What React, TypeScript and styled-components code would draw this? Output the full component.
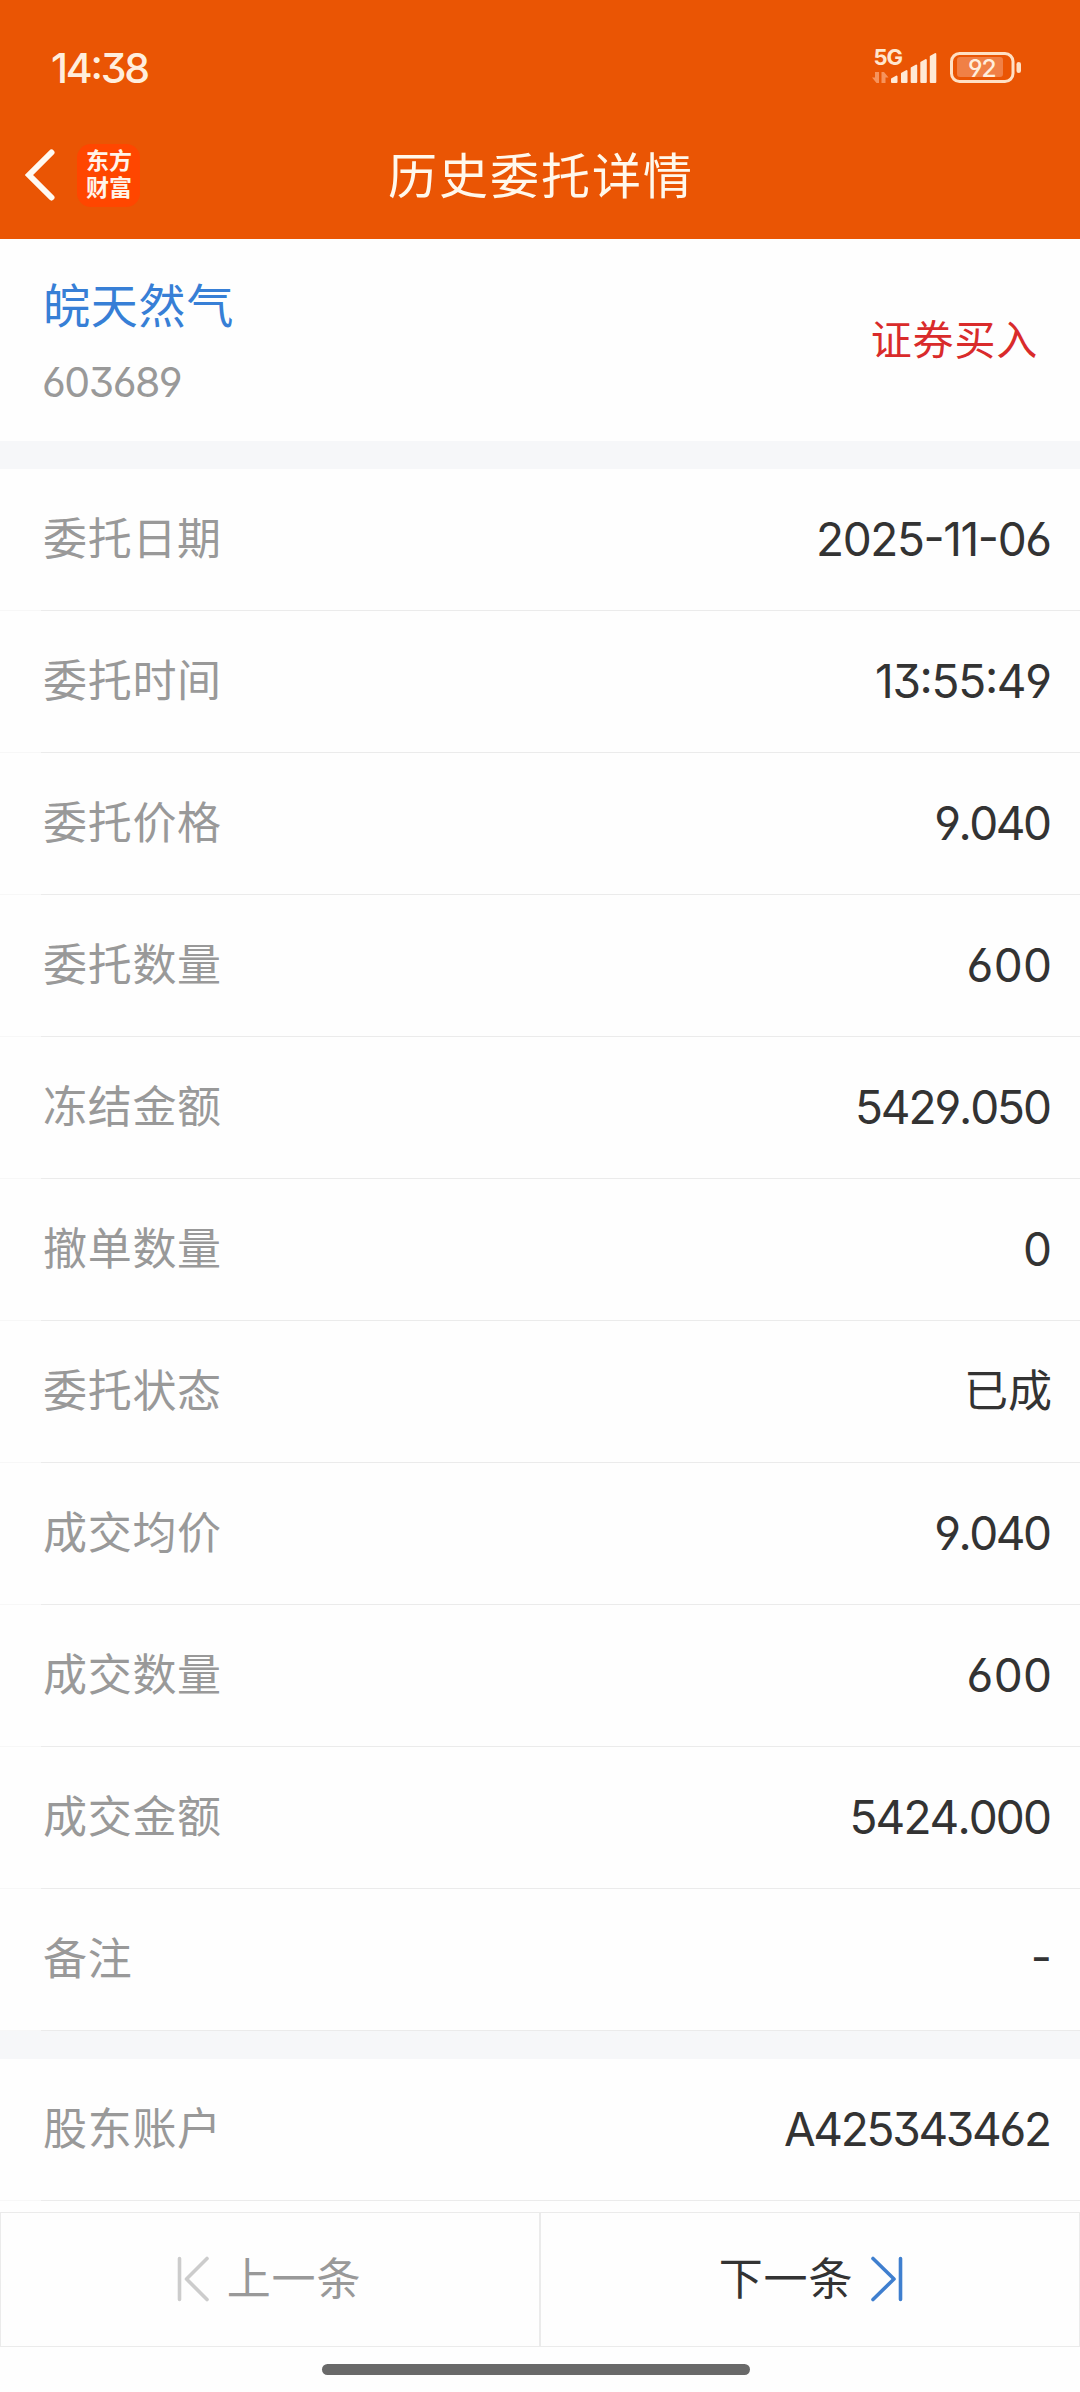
import React from "react";
import styled, { createGlobalStyle } from "styled-components";

const Global = createGlobalStyle`
  * { box-sizing: border-box; }
  html, body { margin: 0; padding: 0; background: #fefefe; }
  body {
    font-family: Inter, "Noto Sans CJK SC", sans-serif;
    font-kerning: none;
    font-feature-settings: "cv03" 1, "cv04" 1, "cv09" 1, "case" 1, "calt" 0;
  }
`;

const Screen = styled.div`
  width: 1080px;
  height: 2392px;
  display: flex;
  flex-direction: column;
  background: #fefefe;
  overflow: hidden;
`;

const Header = styled.header`
  height: 239px;
  flex: none;
  background: #ea5504;
  color: #fff8ec;
`;

const StatusBar = styled.div`
  height: 112px;
  padding: 24px 58px 0 51px;
  display: flex;
  justify-content: space-between;
  align-items: center;
`;

const Clock = styled.span`
  font-size: 41px;
  line-height: 44px;
  font-weight: 500;
  letter-spacing: -2.2px;
  color: #ffeedd;
`;

const StatusIcons = styled.svg`
  display: block;
  width: 152px;
  height: 56px;
`;

const NavBar = styled.nav`
  height: 127px;
  display: grid;
  grid-template-columns: 1fr auto 1fr;
  align-items: center;
  padding: 0 25px;
`;

const NavLeft = styled.div`
  display: flex;
  align-items: center;
  gap: 22px;
`;

const BackIcon = styled.svg`
  display: block;
  width: 30px;
  height: 52px;
  margin-bottom: 2px;
`;

const AppBadge = styled.div`
  width: 63px;
  height: 63px;
  border-radius: 14px;
  background: #ff4600;
  color: #fff4ea;
  padding: 2px 8px 0 9px;
  font: 700 23px/27px "Noto Sans CJK SC", sans-serif;
  word-break: break-all;
`;

const Title = styled.h1`
  margin: 0 -2px 6px 0;
  font: 400 49px/60px "Noto Sans CJK SC", sans-serif;
  letter-spacing: 2px;
`;

const Summary = styled.section`
  height: 202px;
  flex: none;
  padding: 0 42px 0 43px;
  display: flex;
  justify-content: space-between;
  align-items: center;
`;

const Stock = styled.div`
  display: flex;
  flex-direction: column;
  gap: 28px;
`;

const StockName = styled.div`
  font: 400 47px/56px "Noto Sans CJK SC", sans-serif;
  letter-spacing: 0.8px;
  color: #377fd6;
`;

const StockCode = styled.div`
  margin-left: -1px;
  font-size: 41px;
  line-height: 46px;
  letter-spacing: -1.5px;
  color: #999;
`;

const Side = styled.div`
  margin-bottom: 6px;
  font: 400 41px/50px "Noto Sans CJK SC", sans-serif;
  letter-spacing: 0.8px;
  color: #d92b2b;
`;

const Band = styled.div`
  height: 28px;
  flex: none;
  background: #f6f7f9;
`;

const Row = styled.div`
  height: 142px;
  flex: none;
  padding: 0 28px 0 43px;
  display: flex;
  justify-content: space-between;
  align-items: center;
  border-bottom: 1px solid;
  border-image: linear-gradient(to right, #f7f7f7 42px, #ebebeb 42px) 1;
`;

const Label = styled.span`
  margin-bottom: 7px;
  font: 400 44px/60px "Noto Sans CJK SC", sans-serif;
  letter-spacing: 0.7px;
  color: #999;
`;

const Value = styled.span<{ $tracking: number }>`
  font-size: 46px;
  line-height: 60px;
  letter-spacing: ${(p) => p.$tracking}px;
  margin-right: ${(p) => -p.$tracking}px;
  margin-bottom: 1px;
  color: #333;
`;

const TextValue = styled(Label)`
  color: #333;
  letter-spacing: 0;
`;

const Pager = styled.footer`
  margin-top: 11px;
  height: 135px;
  flex: none;
  display: flex;
  border: 1px solid #ebebeb;
`;

const PagerButton = styled.button<{ $disabled?: boolean }>`
  flex: 1;
  border: 0;
  padding: ${(p) => (p.$disabled ? "0 2px 0 0" : "0 0 0 2px")};
  background: none;
  display: flex;
  align-items: center;
  justify-content: center;
  gap: 18px;
  color: ${(p) => (p.$disabled ? "#999" : "#333")};
  & + & { border-left: 2px solid #ebebeb; }
`;

const PagerText = styled.span`
  margin-bottom: 7px;
  font: 400 44px/60px "Noto Sans CJK SC", sans-serif;
  letter-spacing: 0.8px;
`;

const PagerIcon = styled.svg`
  display: block;
  width: 32px;
  height: 46px;
  margin-bottom: 2px;
  fill: none;
  stroke-width: 3.6;
  stroke-linecap: round;
  stroke-linejoin: round;
`;

const HomeArea = styled.div`
  flex: 1;
  display: flex;
  justify-content: center;
  padding-top: 17px;
`;

const HomeBar = styled.div`
  width: 428px;
  height: 11px;
  margin-right: 8px;
  border-radius: 6px;
  background: #696969;
`;

type Entry = { label: string; value: string; tracking?: number };

const order: Entry[] = [
  { label: "委托日期", value: "2025-11-06", tracking: -1.4 },
  { label: "委托时间", value: "13:55:49", tracking: -1.3 },
  { label: "委托价格", value: "9.040", tracking: -2.5 },
  { label: "委托数量", value: "600", tracking: 0.3 },
  { label: "冻结金额", value: "5429.050", tracking: -2.1 },
  { label: "撤单数量", value: "0", tracking: 0 },
  { label: "委托状态", value: "已成" },
  { label: "成交均价", value: "9.040", tracking: -2.5 },
  { label: "成交数量", value: "600", tracking: 0.3 },
  { label: "成交金额", value: "5424.000", tracking: -1.9 },
  { label: "备注", value: "-", tracking: 0 },
];

const account: Entry[] = [{ label: "股东账户", value: "A425343462", tracking: -2.3 }];

const Rows = ({ entries }: { entries: Entry[] }) => (
  <>
    {entries.map((e) => (
      <Row key={e.label}>
        <Label>{e.label}</Label>
        {e.tracking === undefined ? (
          <TextValue>{e.value}</TextValue>
        ) : (
          <Value $tracking={e.tracking}>{e.value}</Value>
        )}
      </Row>
    ))}
  </>
);

export default function App() {
  return (
    <>
      <Global />
      <Screen>
        <Header>
          <StatusBar>
            <Clock>14:38</Clock>
            <StatusIcons viewBox="870 40 152 56">
              <text x="873.500" y="65" fontSize="22" fontWeight="700" letterSpacing="-1" fill="#ffe6cf">5G</text>
              <g fill="#f6935c">
                <path d="M875 72h4v11h-2.500L872 77.500h3z" />
                <path d="M881.500 83h4v-5.500h3L884 72h-2.500z" />
              </g>
              <g fill="#ffe9d6" stroke="#ffe9d6" strokeWidth="2" strokeLinejoin="round">
                <path d="M892 79l4.500-2.500V82H892z" />
                <path d="M902 73.500l4.500-2.500v11H902z" />
                <path d="M911.700 68l4.500-2.500V82h-4.500z" />
                <path d="M921.300 62.500l4.500-2.500v22h-4.500z" />
                <path d="M930.800 56.500l4.500-2.500v28h-4.500z" />
              </g>
              <rect x="951.500" y="53.500" width="61.500" height="28" rx="8" fill="none" stroke="#ffe0c4" strokeWidth="3" />
              <rect x="957" y="57" width="46" height="20" rx="3" fill="#f08046" />
              <rect x="1016.500" y="62" width="4.500" height="11" rx="2.250" fill="#ffe0c4" />
              <text x="968" y="76.500" fontSize="24.500" fontWeight="500" letterSpacing="-1" fill="#ffeedd">92</text>
            </StatusIcons>
          </StatusBar>
          <NavBar>
            <NavLeft>
              <BackIcon viewBox="0 0 30 52" fill="none" stroke="#fffaf2" strokeWidth="6" strokeLinecap="round" strokeLinejoin="miter">
                <path d="M26.500 3.500L4 26l22.500 22.500" />
              </BackIcon>
              <AppBadge>东方财富</AppBadge>
            </NavLeft>
            <Title>历史委托详情</Title>
          </NavBar>
        </Header>
        <Summary>
          <Stock>
            <StockName>皖天然气</StockName>
            <StockCode>603689</StockCode>
          </Stock>
          <Side>证券买入</Side>
        </Summary>
        <Band />
        <Rows entries={order} />
        <Band />
        <Rows entries={account} />
        <Pager>
          <PagerButton $disabled>
            <PagerIcon viewBox="0 0 32 46" stroke="#ccc">
              <path d="M2.500 2.500v41M30 2.500L9.500 23 30 43.500" />
            </PagerIcon>
            <PagerText>上一条</PagerText>
          </PagerButton>
          <PagerButton>
            <PagerText>下一条</PagerText>
            <PagerIcon viewBox="0 0 32 46" stroke="#3f7fcf">
              <path d="M29.500 2.500v41M2 2.500L23 23 2 43.500" />
            </PagerIcon>
          </PagerButton>
        </Pager>
        <HomeArea>
          <HomeBar />
        </HomeArea>
      </Screen>
    </>
  );
}
